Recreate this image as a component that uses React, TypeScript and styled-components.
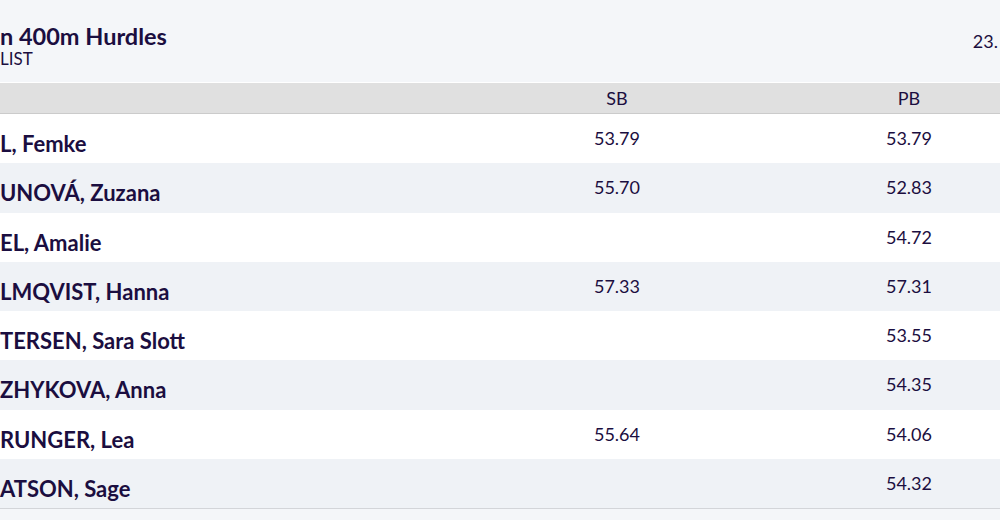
import React from "react";
import styled, { createGlobalStyle } from "styled-components";

const Global = createGlobalStyle`
  html, body { margin: 0; padding: 0; background: #f4f6f9; }
  body {
    font-family: Lato, "Noto Sans", sans-serif;
    color: #1b0e40;
    overflow: hidden;
  }
`;

const Page = styled.div`
  width: 1000px;
  height: 520px;
  overflow: hidden;
  background: #f4f6f9;
  display: flex;
  flex-direction: column;
`;

const Header = styled.header`
  height: 83px;
  box-sizing: border-box;
  display: flex;
  justify-content: space-between;
  align-items: flex-start;
  padding-top: 24px;
  border-bottom: 1px solid #ffffff;
`;

const TitleBlock = styled.div`
  display: flex;
  flex-direction: column;
  gap: 2px;
`;

const Title = styled.h1`
  margin: 0;
  font-size: 23.5px;
  font-weight: 700;
  line-height: 24px;
`;

const Subtitle = styled.div`
  font-size: 17px;
  line-height: 18px;
`;

const DateText = styled.div`
  font-size: 18px;
  line-height: 22px;
  margin-top: 6px;
  padding-right: 2px;
`;

const Table = styled.div`
  display: flex;
  flex-direction: column;
  border-bottom: 1px solid #d3d5d9;
`;

const HeadRow = styled.div`
  display: grid;
  grid-template-columns: 471px 292px 292px;
  height: 30px;
  align-items: center;
  background: #e0e0e0;
  border-bottom: 1px solid #cbcbcb;
  font-size: 18px;
  line-height: 22px;
`;

const Row = styled.div<{ $alt?: boolean }>`
  display: grid;
  grid-template-columns: 471px 292px 292px;
  height: 49.25px;
  align-items: start;
  background: ${(p) => (p.$alt ? "#eff2f6" : "#ffffff")};
`;

const HeadCell = styled.div`
  text-align: center;
`;

const NameCell = styled.div`
  font-size: 22px;
  font-weight: 700;
  line-height: 26px;
  padding-top: 17px;
  white-space: nowrap;
`;

const NumCell = styled.div`
  font-size: 18px;
  line-height: 22px;
  padding-top: 13px;
  text-align: center;
`;

const rows = [
  { name: "L, Femke", sb: "53.79", pb: "53.79" },
  { name: "UNOVÁ, Zuzana", sb: "55.70", pb: "52.83" },
  { name: "EL, Amalie", sb: "", pb: "54.72" },
  { name: "LMQVIST, Hanna", sb: "57.33", pb: "57.31" },
  { name: "TERSEN, Sara Slott", sb: "", pb: "53.55" },
  { name: "ZHYKOVA, Anna", sb: "", pb: "54.35" },
  { name: "RUNGER, Lea", sb: "55.64", pb: "54.06" },
  { name: "ATSON, Sage", sb: "", pb: "54.32" },
];

export default function App() {
  return (
    <Page>
      <Global />
      <Header>
        <TitleBlock>
          <Title>n 400m Hurdles</Title>
          <Subtitle>LIST</Subtitle>
        </TitleBlock>
        <DateText>23.</DateText>
      </Header>
      <Table>
        <HeadRow>
          <HeadCell />
          <HeadCell>SB</HeadCell>
          <HeadCell>PB</HeadCell>
        </HeadRow>
        {rows.map((r, i) => (
          <Row key={i} $alt={i % 2 === 1}>
            <NameCell>{r.name}</NameCell>
            <NumCell>{r.sb}</NumCell>
            <NumCell>{r.pb}</NumCell>
          </Row>
        ))}
      </Table>
    </Page>
  );
}
